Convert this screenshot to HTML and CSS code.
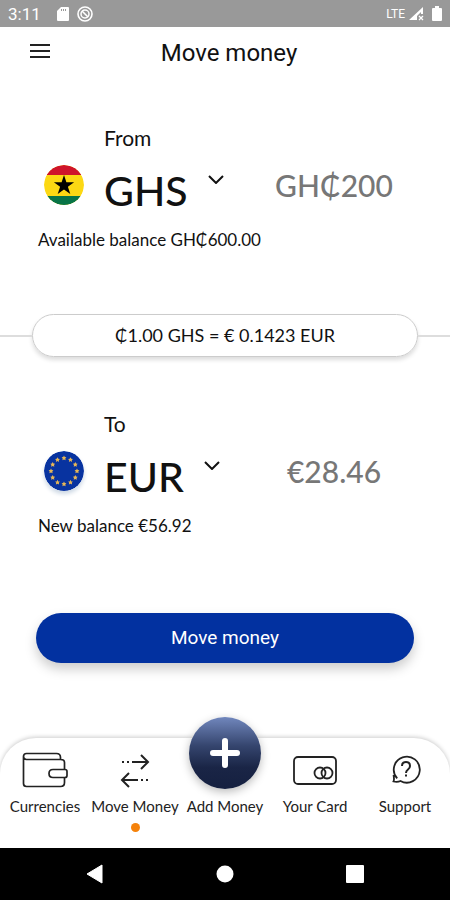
FILE: index.html
```html
<!DOCTYPE html>
<html lang="en">
<head>
<meta charset="utf-8">
<meta name="viewport" content="width=device-width, initial-scale=1">
<title>Move money</title>
<link rel="stylesheet" href="styles.css">
</head>
<body>
<div class="status">
  <span class="clock">3:11</span>
  <svg class="status-card" width="12" height="14" viewBox="0 0 12 14"><path fill="#fff" fill-rule="evenodd" d="M4 0h7a1 1 0 0 1 1 1v12a1 1 0 0 1-1 1H1a1 1 0 0 1-1-1V4zM4 2v2h1V2zm2 0v2h1V2zm2 0v2h1V2z"/></svg>
  <svg width="16" height="16" viewBox="0 0 16 16" fill="none" stroke="#fff"><circle cx="8" cy="8" r="7" stroke-width="1.600"/><circle cx="8" cy="8" r="4" stroke-width="1.500"/><path d="M5 5l6 6" stroke-width="1.600"/></svg>
  <span class="network">LTE</span>
  <svg width="15" height="14" viewBox="0 0 15 14"><path fill="#fff" fill-rule="evenodd" d="M0 13L14 0v7h-2V5L8 9v4z"/><path d="M10 9l4 4m0-4l-4 4" stroke="#fff" stroke-width="1.300"/></svg>
  <svg class="battery" width="10" height="15" viewBox="0 0 10 15"><path fill="#fff" d="M3 0h4v2h2a1 1 0 0 1 1 1v11a1 1 0 0 1-1 1H1a1 1 0 0 1-1-1V3a1 1 0 0 1 1-1h2z"/></svg>
</div>

<header class="header">
  <button class="menu" type="button" aria-label="Menu"><svg width="20" height="16" viewBox="0 0 20 16" stroke="#222" stroke-width="2"><path d="M0 2h20M0 8h20M0 14h20"/></svg></button>
  <h1>Move money</h1>
</header>

<main>
  <form class="transfer">
    <section class="account">
      <label class="caption" for="from-currency">From</label>
      <div class="row">
        <svg class="flag" width="40" height="40" viewBox="0 0 40 40"><clipPath id="round"><circle cx="20" cy="20" r="20"/></clipPath><g clip-path="url(#round)"><path fill="#fcd813" d="M0 0h40v40H0z"/><path fill="#cf142b" d="M0 0h40v10H0z"/><path fill="#087447" d="M0 31h40v9H0z"/></g><path d="M20 10l2.400 7.300h7.700l-6.200 4.500 2.400 7.300-6.300-4.500-6.300 4.500 2.400-7.300-6.200-4.500h7.700z"/></svg>
        <div class="currency">
          <select id="from-currency"><option>GHS</option></select>
          <svg class="chevron" width="16" height="9" viewBox="0 0 16 9" fill="none" stroke="#111" stroke-width="2"><path d="M1 1l7 7 7-7"/></svg>
        </div>
        <input class="amount" type="text" value="GH₵200" size="6" aria-label="Amount to move">
      </div>
      <p class="balance">Available balance GH₵600.00</p>
    </section>

    <div class="rate"><p>₵1.00 GHS = € 0.1423 EUR</p></div>

    <section class="account">
      <label class="caption" for="to-currency">To</label>
      <div class="row">
        <svg class="flag flag-eu" width="40" height="40" viewBox="0 0 40 40"><circle cx="20" cy="20" r="20" fill="#0833a0"/><defs><path id="star" fill="#e5b657" d="M0-2.500L.8-.9 2.400-.7 1.300.5 1.600 2.200 0 1.400-1.600 2.200-1.300.5-2.400-.7-.8-.9z"/></defs><use href="#star" x="20" y="7"/><use href="#star" x="26.500" y="8.700"/><use href="#star" x="31.300" y="13.500"/><use href="#star" x="33" y="20"/><use href="#star" x="31.300" y="26.500"/><use href="#star" x="26.500" y="31.300"/><use href="#star" x="20" y="33"/><use href="#star" x="13.500" y="31.300"/><use href="#star" x="8.700" y="26.500"/><use href="#star" x="7" y="20"/><use href="#star" x="8.700" y="13.500"/><use href="#star" x="13.500" y="8.700"/></svg>
        <div class="currency">
          <select id="to-currency"><option>EUR</option></select>
          <svg class="chevron" width="16" height="9" viewBox="0 0 16 9" fill="none" stroke="#111" stroke-width="2"><path d="M1 1l7 7 7-7"/></svg>
        </div>
        <input class="amount" type="text" value="€28.46" size="6" aria-label="Amount received">
      </div>
      <p class="balance">New balance €56.92</p>
    </section>

    <button class="submit" type="submit">Move money</button>
  </form>
</main>

<nav class="tabs">
  <a href="#currencies"><svg class="icon" width="46" height="38" viewBox="0 0 46 38" fill="none" stroke="#222" stroke-width="1.700"><path d="M1.500 5.500v27q0 3 3 3h34q4 0 4-4v-5M42.500 18.500v-7q0-3-4-3h-34q-3 0-3-3t3-3h30q4 0 4 4v2"/><path d="M31 18.500h12q2 0 2 2v4q0 2-2 2H31q-4 0-4-4t4-4z"/></svg>Currencies</a>
  <a class="active" href="#move" aria-current="page"><svg class="icon" width="46" height="38" viewBox="0 0 46 38" fill="none" stroke="#222" stroke-width="2"><path d="M20 11h16M29 4l7 7-7 7M26 29H10M17 22l-7 7 7 7"/><path d="M10 11h2m3 0h2M29 29h2m3 0h2"/></svg>Move Money</a>
  <a href="#add"><span class="fab"><svg width="30" height="30" viewBox="0 0 30 30" stroke="#fff" stroke-width="6" stroke-linecap="round"><path d="M15 3v24M3 15h24"/></svg></span>Add Money</a>
  <a href="#card"><svg class="icon" width="46" height="38" viewBox="0 0 46 38" fill="none" stroke="#222" stroke-width="1.800"><rect x="2" y="6" width="42" height="27" rx="4"/><circle cx="28" cy="22" r="5.500"/><circle cx="35" cy="22" r="5.500"/></svg>Your Card</a>
  <a href="#support"><svg class="icon" width="46" height="38" viewBox="0 0 46 38" fill="none" stroke="#222" stroke-width="1.800"><path d="M15.200 27.400A13 13 0 1 1 18.500 30Q15.500 31.500 11.500 30.500 12.500 28.500 11.500 24"/><path stroke-width="2" d="M20 15q0-4 4-4t4 4q0 2-2 3.500t-2 3.500M24 23.500v2"/></svg>Support</a>
</nav>

<footer class="system">
  <button type="button" aria-label="Back"><svg width="18" height="20" viewBox="0 0 18 20"><path fill="#fff" d="M1 10L16 1v18z" stroke="#fff" stroke-linejoin="round"/></svg></button>
  <button type="button" aria-label="Home"><svg width="18" height="18" viewBox="0 0 18 18"><circle cx="9" cy="9" r="8.500" fill="#fff"/></svg></button>
  <button type="button" aria-label="Overview"><svg width="18" height="18" viewBox="0 0 18 18"><rect width="18" height="18" rx="1" fill="#fff"/></svg></button>
</footer>
</body>
</html>
```

FILE: styles.css
```css
* { box-sizing: border-box; }

body {
  margin: 0;
  min-height: 100vh;
  display: flex;
  flex-direction: column;
  background: #fff;
  color: #111;
  font-family: Lato, sans-serif;
}

h1, p { margin: 0; font-weight: 400; }

button {
  border: 0;
  padding: 0;
  background: none;
  cursor: pointer;
}

svg { display: block; flex: none; }

.status {
  display: flex;
  align-items: center;
  gap: 8px;
  height: 27px;
  padding: 0 8px;
  background: #999;
  color: #fff;
  font-family: Roboto, sans-serif;
}

.clock { font-size: 17px; }

.status-card { margin-left: 8px; }

.network {
  margin-left: auto;
  margin-right: -4px;
  font-size: 12px;
}

.header {
  display: grid;
  grid-template-columns: 40px 1fr 32px;
  align-items: center;
  height: 52px;
  padding: 0 20px;
}

.menu {
  display: grid;
  place-items: center;
  height: 44px;
  padding-bottom: 4px;
}

.header h1 {
  text-align: center;
  font-family: Roboto, sans-serif;
  font-size: 24px;
}

main { flex: 1; }

.transfer {
  display: flex;
  flex-direction: column;
  padding-top: 47px;
}

.account { padding: 0 20px 0 38px; }

.caption {
  display: block;
  margin-left: 66px;
  font-size: 21px;
  line-height: 24px;
}

.row {
  display: grid;
  grid-template-columns: 66px 1fr 192px;
  align-items: start;
  padding: 15px 0 11px;
}

.flag { margin-left: 6px; border-radius: 50%; }

.flag-eu { box-shadow: 0 3px 4px #cdd8e4; }

.currency { display: flex; align-items: start; gap: 20px; }

select {
  appearance: none;
  field-sizing: content;
  height: 52px;
  border: 0;
  padding: 0;
  background: none;
  color: #111;
  font: 500 41px/52px Lato, sans-serif;
}

.chevron { margin-top: 10px; }

.amount {
  width: 100%;
  height: 40px;
  border: 0;
  padding: 0;
  background: none;
  color: #777;
  text-align: center;
  font: 500 30px/40px Lato, sans-serif;
}

.balance { font-size: 17px; line-height: 24px; }

.rate {
  display: flex;
  align-items: center;
  margin: 62px 0 55px;
}

.rate::before, .rate::after {
  content: "";
  width: 32px;
  height: 2px;
  background: #ddd;
}

.rate p {
  flex: 1;
  border: 1px solid #ccc;
  border-radius: 24px;
  box-shadow: 0 3px 4px #ddd;
  text-align: center;
  font-size: 18px;
  line-height: 41px;
}

.submit {
  height: 50px;
  margin: 75px 36px;
  border-radius: 25px;
  background: #0231a0;
  box-shadow: 0 6px 12px #ccc;
  color: #fff;
  font: 400 19px/50px Roboto, sans-serif;
}

.tabs {
  display: grid;
  grid-template-columns: repeat(5, 1fr);
  height: 110px;
  padding-top: 13px;
  border-radius: 36px 36px 0 0;
  box-shadow: 0 -1px 4px #ccc;
}

.tabs a {
  display: flex;
  flex-direction: column;
  align-items: center;
  color: #222;
  text-decoration: none;
  white-space: nowrap;
  font-size: 15px;
  line-height: 20px;
}

.icon { margin-bottom: 7px; }

.active::after {
  content: "";
  width: 9px;
  height: 9px;
  margin-top: 7px;
  border-radius: 50%;
  background: #f5820b;
}

.fab {
  display: grid;
  place-items: center;
  width: 72px;
  height: 72px;
  margin: -34px 0 7px;
  border-radius: 50%;
  background: linear-gradient(#7187bd, #35456e 40%, #1a2546 70%, #152040);
  box-shadow: 0 3px 10px #bbb;
}

.system {
  display: flex;
  justify-content: center;
  gap: 82px;
  height: 52px;
  background: #000;
}

.system button {
  display: grid;
  place-items: center;
  width: 48px;
}
```
